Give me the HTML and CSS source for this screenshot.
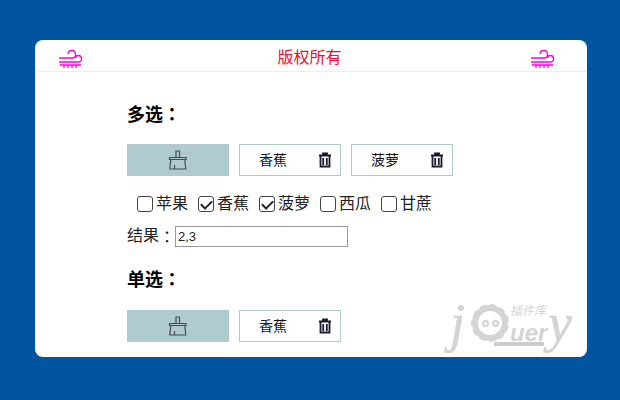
FILE: index.html
```html
<!DOCTYPE html>
<html lang="zh">
<head>
  <meta charset="UTF-8" />
  <title>版权所有</title>
  <link rel="stylesheet" href="styles.css">
</head>
<body>
  <div class="card">
    <div class="header">
      <svg class="wind" viewBox="0 0 24 20" width="24" height="20"><path d="M0 10h14c3.500 0 3.500-7.500-1-7.500-2.500 0-4 1.500-4 3.500M0 14h20c3.500 0 3.500-6.500-.500-6.500-2 0-3 1-3 2.500M1 17h21M5 17v3M9 17v3M13 17v3M17 17v3"/></svg>
      <span class="title">版权所有</span>
      <svg class="wind" viewBox="0 0 24 20" width="24" height="20"><path d="M0 10h14c3.500 0 3.500-7.500-1-7.500-2.500 0-4 1.500-4 3.500M0 14h20c3.500 0 3.500-6.500-.500-6.500-2 0-3 1-3 2.500M1 17h21M5 17v3M9 17v3M13 17v3M17 17v3"/></svg>
    </div>

    <div class="content">
      <h3>多选<span class="colon" lang="zh-Hant">：</span></h3>
      <div class="chips">
        <button class="clear-btn"><svg viewBox="0 0 20 20" width="20" height="20"><path d="M8 7.500V1h3.500v6.500M1.500 7.500h16.500v2h-16.500zM2.800 9.500 1.800 19h16l-1-9.500M6.500 19v-4"/></svg></button>
        <div class="chip"><span>香蕉</span><svg class="trash" viewBox="0 0 14 16" width="14" height="16"><path d="M1 3.500h12M5 3V1.500h4V3M2.500 4v10.500h9V4M5.200 6v7M8.800 6v7"/></svg></div>
        <div class="chip"><span>菠萝</span><svg class="trash" viewBox="0 0 14 16" width="14" height="16"><path d="M1 3.500h12M5 3V1.500h4V3M2.500 4v10.500h9V4M5.200 6v7M8.800 6v7"/></svg></div>
      </div>
      <div class="checks">
        <label><input type="checkbox" />苹果</label>
        <label><input type="checkbox" checked />香蕉</label>
        <label><input type="checkbox" checked />菠萝</label>
        <label><input type="checkbox" />西瓜</label>
        <label><input type="checkbox" />甘蔗</label>
      </div>
      <div class="result">结果<span class="colon" lang="zh-Hant">：</span><input type="text" value="2,3" /></div>

      <h3 class="single">单选<span class="colon" lang="zh-Hant">：</span></h3>
      <div class="chips">
        <button class="clear-btn"><svg viewBox="0 0 20 20" width="20" height="20"><path d="M8 7.500V1h3.500v6.500M1.500 7.500h16.500v2h-16.500zM2.800 9.500 1.800 19h16l-1-9.500M6.500 19v-4"/></svg></button>
        <div class="chip"><span>香蕉</span><svg class="trash" viewBox="0 0 14 16" width="14" height="16"><path d="M1 3.500h12M5 3V1.500h4V3M2.500 4v10.500h9V4M5.200 6v7M8.800 6v7"/></svg></div>
      </div>
    </div>

    <!-- watermark -->
    <div class="watermark">
      <span class="wm-j">j</span>
      <span class="wm-q"><i></i><i></i></span>
      <span class="wm-word">
        <span class="wm-cn">插件库</span>
        <span class="wm-uer">uer</span>
        <span class="wm-bar"></span>
      </span>
      <span class="wm-y">y</span>
    </div>
  </div>
</body>
</html>
```

FILE: styles.css
```css
* {
  margin: 0;
  padding: 0;
  box-sizing: border-box;
}

body {
  background-color: #01549f;
  font-family: "Liberation Sans", "Noto Sans CJK SC", sans-serif;
  height: 400px;
  padding: 40px 33px 43px 35px;
  overflow: hidden;
}

.card {
  position: relative;
  height: 317px;
  background-color: #fff;
  border-radius: 8px;
}

.header {
  display: flex;
  justify-content: space-between;
  align-items: center;
  height: 32px;
  padding: 0 32px 0 24px;
  border-bottom: 1px solid #eee;
}

.title {
  color: #e60d2e;
  font-size: 16px;
  margin-left: 5px;
}

.wind {
  fill: none;
  stroke: #ff00dd;
  stroke-width: 1.300;
  margin-top: 4px;
}

.content {
  padding: 31px 0 0 92px;
}

h3 {
  height: 24px;
  font-size: 18px;
  line-height: 24px;
  font-weight: bold;
  color: #000;
  margin-bottom: 17px;
}

h3.single {
  margin-top: 20px;
  margin-bottom: 18px;
}

/* centered full width colon */
.colon {
  font-family: "Noto Sans CJK TC", sans-serif;
  line-height: 1;
}

.chips {
  display: flex;
  gap: 10px;
}

.clear-btn {
  display: flex;
  align-items: center;
  justify-content: center;
  width: 102px;
  height: 32px;
  border: none;
  background-color: #afcbcf;
}

.clear-btn svg {
  fill: none;
  stroke: #444c58;
  stroke-width: 1.200;
}

.chip {
  display: flex;
  align-items: center;
  justify-content: space-between;
  width: 102px;
  height: 32px;
  padding: 0 8px 2px 19px;
  border: 1px solid #afcbcf;
  font-size: 14px;
  color: #111;
}

.trash {
  fill: none;
  stroke: #1a1a2a;
  stroke-width: 1.800;
  margin-top: 2px;
}

.checks {
  display: flex;
  gap: 10px;
  margin: 16px 0 0 10px;
  font-size: 16px;
  line-height: 24px;
  color: #222;
}

.checks label {
  display: flex;
  align-items: center;
  gap: 3px;
}

.checks input {
  appearance: none;
  position: relative;
  width: 16px;
  height: 16px;
  background-color: #fff;
  border: 1px solid #444;
  border-radius: 3px;
}

.checks input:checked::after {
  content: "";
  position: absolute;
  left: 4px;
  top: 1px;
  width: 5px;
  height: 9px;
  border: solid #222;
  border-width: 0 2px 2px 0;
  transform: rotate(45deg);
}

.result {
  display: flex;
  align-items: center;
  height: 24px;
  margin-top: 8px;
  font-size: 16px;
  line-height: 24px;
  color: #222;
}

.result input {
  width: 173px;
  height: 21px;
  padding: 0 2px;
  border: 1px solid #999;
  font-family: "Liberation Sans", sans-serif;
  font-size: 13px;
  color: #222;
}

/* watermark */
.watermark {
  position: absolute;
  right: 10px;
  bottom: 4px;
  display: flex;
  align-items: center;
  color: #d4d4d4;
  font-style: italic;
}

.wm-j, .wm-y {
  font-family: "Liberation Serif", serif;
  font-size: 54px;
  line-height: 60px;
  -webkit-text-stroke: 0.600px #d4d4d4;
}

.wm-j {
  width: 22px;
}

.wm-y {
  width: 29px;
}

.wm-q {
  display: flex;
  gap: 3px;
  align-items: center;
  justify-content: center;
  width: 36px;
  height: 36px;
  margin-right: 2px;
  border: 6px solid #d4d4d4;
  border-radius: 50%;
  outline: 2px dashed #d4d4d4;
  outline-offset: -1px;
}

.wm-q i {
  width: 7px;
  height: 7px;
  border: 2px solid #d4d4d4;
  border-radius: 50%;
}

.wm-word {
  display: flex;
  flex-direction: column;
  width: 38px;
  margin-top: 4px;
}

.wm-cn {
  font-size: 12px;
  line-height: 15px;
}

.wm-uer {
  font-size: 24px;
  line-height: 22px;
  margin-top: 3px;
  font-weight: bold;
}

.wm-bar {
  width: 50px;
  height: 4px;
  margin: -2px 0 0 -16px;
  background-color: #cccccc;
}
```
